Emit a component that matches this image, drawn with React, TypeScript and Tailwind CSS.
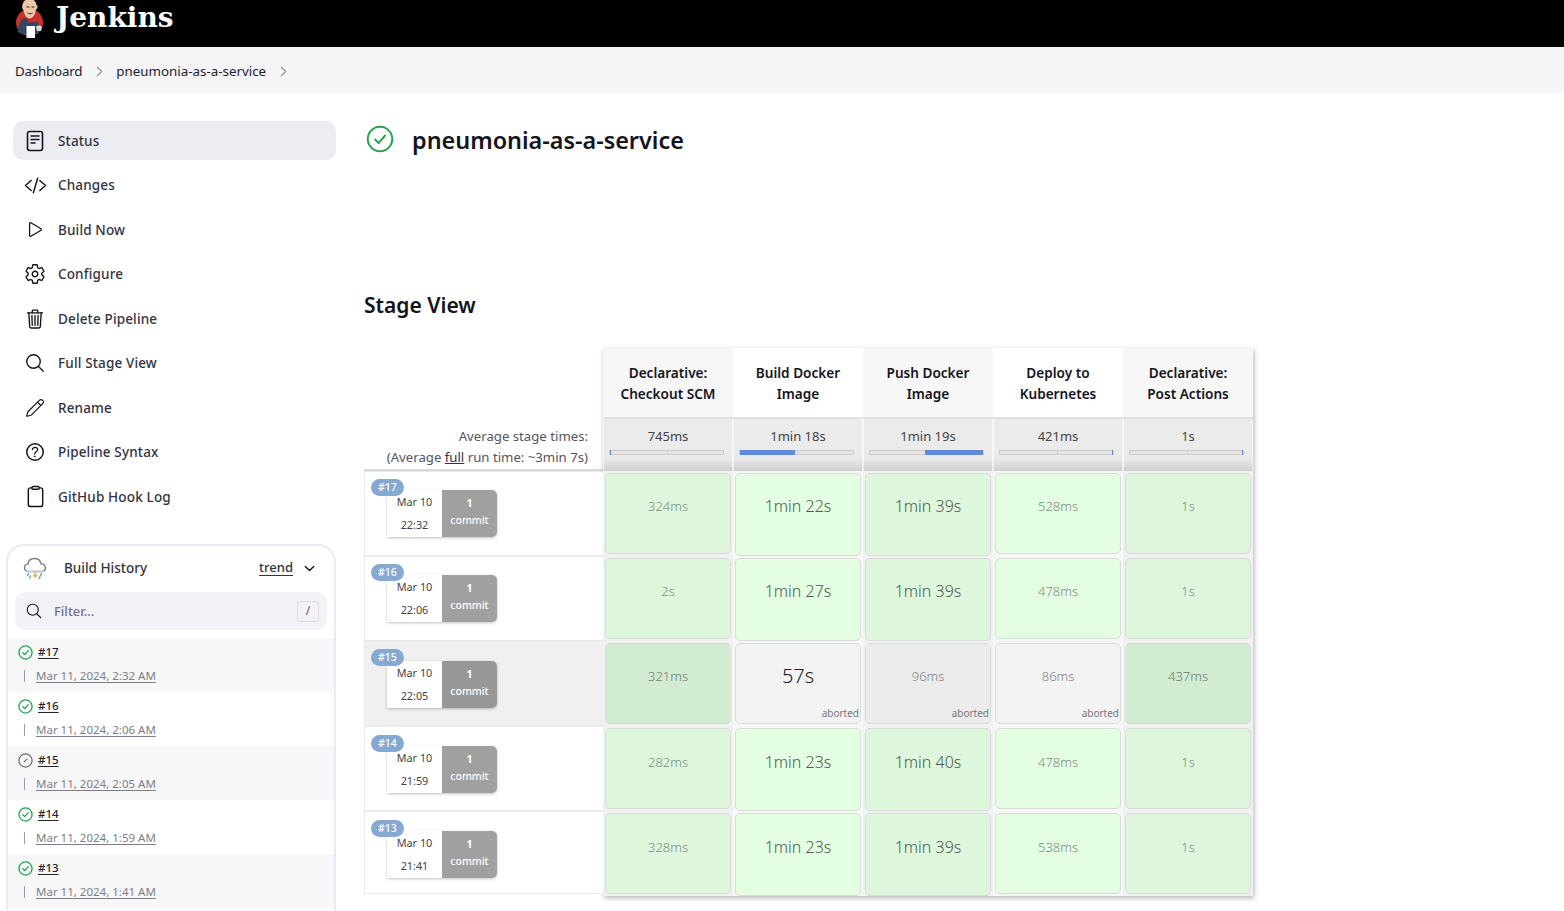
import React from "react";
import {
  IoCodeSlashOutline,
  IoPlayOutline,
  IoSettingsOutline,
  IoTrashOutline,
  IoSearchOutline,
  IoHelpCircleOutline,
  IoClipboardOutline,
  IoChevronDownOutline,
  IoChevronForwardOutline,
} from "react-icons/io5";
import { Pencil } from "lucide-react";

function StatusDoc() {
  return (
    <svg width="22" height="22" viewBox="0 0 22 22" fill="none" stroke="#14141f" strokeWidth="1.6" strokeLinecap="round">
      <rect x="3.5" y="1.5" width="15" height="19" rx="2.2" />
      <path d="M7 6h8M7 9.5h8M7 13h4" strokeWidth="1.5" />
    </svg>
  );
}

function JenkinsLogo() {
  return (
    <svg width="30" height="39" viewBox="0 0 30 39" className="block">
      <circle cx="14.5" cy="22.500" r="13.500" fill="#c8312b" />
      <path d="M3 32c0-7 2-12 6-14l9 2c5 1 7 5 7 9l-2 5H6z" fill="#33475e" />
      <path d="M7.500 5C8 1 11 -1 14.500 -1S21 1 21.500 5c.8 0 1.300 1.500.8 3-.4 1.200-1 1.500-1.500 1.500C20.500 14 18 18.500 14.500 18.500 11 18 9 14 8.500 10 7 9.500 6.800 6.500 7.500 5z" fill="#eec6a8" />
      <path d="M13 18.500l3.500 1.500 4-1.500.5 4-4-.8-4 .8z" fill="#d9272e" />
      <path d="M11.500 26h8.500v12h-8.500z" fill="#ffffff" />
      <path d="M21 26.500c2-1.500 5-1 6 .5l-1 4h-4z" fill="#d8d8d8" />
      <path d="M11.500 7h3M16.500 7h3M12.500 13c1.500 1 4 1 5 0" stroke="#3a2a22" strokeWidth="1" fill="none" />
    </svg>
  );
}

function CheckCircle({ size, sw = 1.4 }: { size: number; sw?: number }) {
  return (
    <svg width={size} height={size} viewBox="0 0 16 16" fill="none" stroke="#1ea64c" strokeWidth={sw} strokeLinecap="round" strokeLinejoin="round">
      <circle cx="8" cy="8" r="7" />
      <path d="M5.200 8.300l2 2 3.700-4.300" />
    </svg>
  );
}

function AbortedCircle({ size }: { size: number }) {
  return (
    <svg width={size} height={size} viewBox="0 0 16 16" fill="none" stroke="#6b6b85" strokeWidth="1.300" strokeLinecap="round">
      <circle cx="8" cy="8" r="7" />
      <path d="M6.500 9.500l3-3" />
    </svg>
  );
}

function Weather() {
  return (
    <svg width="24" height="24" viewBox="0 0 24 24" fill="none">
      <path d="M6 15.500c-3 0-4.500-1.800-4.500-3.800 0-2 1.500-3.400 3.400-3.600C5.400 4.800 8 2.500 11.500 2.500c3.400 0 6 2.200 6.600 5.300 2.500.1 4.400 1.800 4.400 3.900 0 2.200-1.800 3.800-4.500 3.800z" fill="#fff" stroke="#7b7b8e" strokeWidth="1.400" />
      <path d="M2 15.500h20" stroke="#c9c9d4" strokeWidth="1.200" />
      <path d="M12.500 16l-3 4.500h2.500l-1 3.500 3.800-5h-2.500l1.500-3z" fill="#f6b02c" />
      <path d="M5.500 17.500l-1 2M7.500 20l-.8 2M18.500 17.500l-1 2M17 20.500l-.8 2" stroke="#4da6e8" strokeWidth="1.400" strokeLinecap="round" />
    </svg>
  );
}

const nav: [string, React.ReactNode][] = [
  ["Status", <StatusDoc />],
  ["Changes", <IoCodeSlashOutline size={23} />],
  ["Build Now", <IoPlayOutline size={21} />],
  ["Configure", <IoSettingsOutline size={22} />],
  ["Delete Pipeline", <IoTrashOutline size={22} />],
  ["Full Stage View", <IoSearchOutline size={22} />],
  ["Rename", <Pencil size={20} strokeWidth={1.4} />],
  ["Pipeline Syntax", <IoHelpCircleOutline size={24} />],
  ["GitHub Hook Log", <IoClipboardOutline size={23} />],
];

const history = [
  { n: "#17", d: "Mar 11, 2024, 2:32 AM", ok: true },
  { n: "#16", d: "Mar 11, 2024, 2:06 AM", ok: true },
  { n: "#15", d: "Mar 11, 2024, 2:05 AM", ok: false },
  { n: "#14", d: "Mar 11, 2024, 1:59 AM", ok: true },
  { n: "#13", d: "Mar 11, 2024, 1:41 AM", ok: true },
];

const heads = [
  ["Declarative:", "Checkout SCM"],
  ["Build Docker", "Image"],
  ["Push Docker", "Image"],
  ["Deploy to", "Kubernetes"],
  ["Declarative:", "Post Actions"],
];

const avgs: { t: string; from: number; w: number }[] = [
  { t: "745ms", from: 0, w: 1 },
  { t: "1min 18s", from: 0, w: 48.5 },
  { t: "1min 19s", from: 49, w: 51 },
  { t: "421ms", from: 99, w: 1 },
  { t: "1s", from: 99, w: 1 },
];

const runs = [
  { id: "#17", date: "Mar 10", time: "22:32", cells: ["324ms", "1min 22s", "1min 39s", "528ms", "1s"] },
  { id: "#16", date: "Mar 10", time: "22:06", cells: ["2s", "1min 27s", "1min 39s", "478ms", "1s"] },
  { id: "#15", date: "Mar 10", time: "22:05", cells: ["321ms", "57s", "96ms", "86ms", "437ms"] },
  { id: "#14", date: "Mar 10", time: "21:59", cells: ["282ms", "1min 23s", "1min 40s", "478ms", "1s"] },
  { id: "#13", date: "Mar 10", time: "21:41", cells: ["328ms", "1min 23s", "1min 39s", "538ms", "1s"] },
];

function Cell({ text, col, row }: { text: string; col: number; row: number }) {
  const odd = col % 2 === 0;
  const aborted = row === 2 && col >= 1 && col <= 3;
  const big = col === 1 || col === 2;
  const rowBg = odd ? "bg-[#f1f1f1]" : "bg-[#f7f7f7]";
  let bg = odd ? "bg-[#def7dc]" : "bg-[#e4fee2]";
  if (row === 2) {
    if (col === 0 || col === 4) bg = "bg-[#d2ecd1]";
    else if (col === 1 || col === 3) bg = "bg-[#f3f3f3]";
    else bg = "bg-[#ececec]";
  }
  let txt = big ? "text-[16px] font-light text-[#4d5b4d]" : "text-[13px] font-light text-[#7d8a7d]";
  if (aborted && col === 1) txt = "text-[20px] font-light text-[#222222]";
  if (aborted && col !== 1) txt = "text-[13px] font-light text-[#808080]";
  if (row === 2 && (col === 0 || col === 4)) txt = "text-[13px] font-light text-[#6f7f6f]";
  const pad = big && !aborted ? "pb-0" : "pb-[2px]";
  const textTop = row >= 3 ? "pt-[23px]" : "pt-[22px]";
  return (
    <div className={`w-[130px] h-[85px] px-[2px] pt-[2px] ${pad} ${rowBg}`}>
      <div className={`relative h-full rounded-[5px] border border-[#d8dcd8] text-center leading-[20px] ${textTop} ${bg} ${txt}`}>
        {text}
        {aborted && (
          <span className="absolute right-[1px] bottom-[3px] text-[10px] font-normal leading-[14px] text-[#777777]">aborted</span>
        )}
      </div>
    </div>
  );
}

export default function App() {
  return (
    <div className="w-[1564px] h-[911px] overflow-hidden bg-white text-[#14141f]" style={{ fontFamily: '"Noto Sans", sans-serif' }}>
      <header className="h-[47px] bg-black flex items-start pl-[15px] overflow-hidden">
        <JenkinsLogo />
        <span className="ml-[11px] mt-0 text-[28px] leading-[36px] font-bold text-white" style={{ fontFamily: '"DejaVu Serif", serif' }}>
          Jenkins
        </span>
      </header>
      <nav className="h-[46px] bg-[#f5f5f8] flex items-center pl-[15px] pt-[3px] text-[13.350px] text-[#22222e]">
        <span className="tracking-[-0.2px]">Dashboard</span>
        <IoChevronForwardOutline size={15} className="ml-[9.500px] text-[#9a9aa8]" />
        <span className="ml-[9.500px]">pneumonia-as-a-service</span>
        <IoChevronForwardOutline size={15} className="ml-[10px] text-[#9a9aa8]" />
      </nav>
      <div className="flex">
        <aside className="w-[364px] shrink-0 pt-[28px] pl-[13px]">
          <ul className="flex flex-col gap-[5.500px] w-[323px]">
            {nav.map(([label, icon], i) => (
              <li key={label} className={`h-[39px] flex items-center rounded-[10px] ${i === 0 ? "bg-[#ecedf3]" : ""}`}>
                <span className="w-[44px] mr-[1px] flex justify-center text-[#14141f]">{icon}</span>
                <span className="mt-[1px] text-[13.500px] font-medium text-[#33333f] tracking-[0.15px]">{label}</span>
              </li>
            ))}
          </ul>
          <section className="mt-[28px] ml-[-7px] w-[330px] pb-[6px] border-2 border-b-0 border-[#eaeaf3] rounded-t-[18px]">
            <div className="h-[46px] flex items-center pl-[15px] pr-[17px] pb-[2px]">
              <Weather />
              <span className="ml-[17px] text-[13.500px] font-medium text-[#33333f]">Build History</span>
              <span className="ml-auto text-[13px] font-medium underline underline-offset-[3px] text-[#33333f]">trend</span>
              <IoChevronDownOutline size={15} className="ml-[9px]" />
            </div>
            <div className="mx-[7px] h-[38px] bg-[#f2f2f7] rounded-[10px] flex items-center pl-[10px] pr-[8px]">
              <IoSearchOutline size={18} />
              <span className="ml-[11px] mt-[1px] text-[13px] font-medium text-[#73738c]">Filter...</span>
              <span className="ml-auto w-[22px] h-[21px] border border-[#dcdce6] rounded-[4px] flex items-center justify-center text-[12px] text-[#55556a]">/</span>
            </div>
            <div className="mt-[8px]">
              {history.map((h, i) => (
                <div key={h.n} className={`h-[54px] pl-[10px] pt-[4px] ${i % 2 === 0 ? "bg-[#f7f7f8]" : "bg-white"}`}>
                  <div className="flex items-center h-[20px]">
                    {h.ok ? <CheckCircle size={15} /> : <AbortedCircle size={15} />}
                    <span className="ml-[5px] text-[11.500px] font-medium underline underline-offset-[2px] text-[#22222e]">{h.n}</span>
                  </div>
                  <div className="flex items-center h-[20px] mt-[3.500px]">
                    <span className="ml-[6px] w-px h-[12px] bg-[#9a9aa6]" />
                    <span className="ml-[11px] text-[11.500px] underline underline-offset-[2px] text-[#7d7d88]">{h.d}</span>
                  </div>
                </div>
              ))}
            </div>
          </section>
        </aside>
        <main className="flex-1 min-w-0">
          <div className="h-[92px] pt-[30px] flex items-start">
            <div className="ml-[2px] mt-[2px]"><CheckCircle size={28} sw={1.100} /></div>
            <h1 className="ml-[18px] text-[23.400px] leading-[34px] font-semibold text-[#14141f]">pneumonia-as-a-service</h1>
          </div>
          <h2 className="mt-[105px] text-[21px] leading-[30px] font-semibold text-[#14141f]">Stage View</h2>
          <div className="mt-[28px] flex items-start">
            <div className="w-[239px] shrink-0">
              <div className="h-[71px]" />
              <div className="h-[50px] pt-[7px] pr-[15px] text-right text-[13.200px] leading-[21px] text-[#55555f]">
                <div className="whitespace-nowrap">Average stage times:</div>
                <div className="whitespace-nowrap">(Average <span className="underline text-[#33333f]">full</span> run time: ~3min 7s)</div>
              </div>
              <div className="border-t-2 border-[#d8d8d8]">
                {runs.map((r, i) => (
                  <div key={r.id} className={`relative border border-r-0 border-[#ebebeb] pl-[22px] ${i >= 2 ? "pt-[19px]" : "pt-[18px]"} ${i === 4 ? "h-[83px]" : "h-[85px]"} ${i === 2 ? "bg-[#f0f0f0]" : "bg-white"}`}>
                    <span className={`absolute left-[6px] h-[17px] px-[7px] rounded-full bg-[#86a9d2] text-white text-[10.500px] leading-[17px] font-medium ${i >= 3 ? "top-[8px]" : "top-[7px]"}`}>{r.id}</span>
                    <div className="flex w-[110px] h-[47px] rounded-r-[5px] shadow-[0_1px_3px_rgba(0,0,0,0.25)]">
                      <div className="w-[55px] bg-white text-center text-[10.800px] text-[#444444] leading-[23px]">
                        <div>{r.date}</div>
                        <div>{r.time}</div>
                      </div>
                      <div className={`w-[55px] rounded-r-[5px] text-center text-white text-[10.500px] font-medium leading-[17px] pt-[5px] ${i === 2 ? "bg-[#979797]" : "bg-[#a0a0a0]"}`}>
                        <div className="font-bold">1</div>
                        <div>commit</div>
                      </div>
                    </div>
                  </div>
                ))}
              </div>
            </div>
            <div className="w-[650px] shrink-0 shadow-[1px_2px_5px_rgba(0,0,0,0.3)]">
              <div className="flex h-[71px]">
                {heads.map((h, i) => (
                  <div key={i} className={`w-[130px] border-b-2 border-[#e0e0e0] flex flex-col items-center justify-center text-[13.600px] leading-[21px] font-semibold text-[#14141f] ${i % 2 === 0 ? "bg-[#f7f7f7]" : "bg-white"}`}>
                    <div>{h[0]}</div>
                    <div>{h[1]}</div>
                  </div>
                ))}
              </div>
              <div className="flex h-[52px]">
                {avgs.map((a, i) => (
                  <div key={i} className="w-[130px] pt-[7px] text-center text-[13px] leading-[21px] text-[#444444] bg-gradient-to-b from-[#ebebeb] from-75% to-[#cfcfcf] border-x border-white/60">
                    <div>{a.t}</div>
                    <div className="relative ml-[5px] mt-[3px] w-[115px] h-[5px] bg-[#e4e4e4] border border-[#cccccc]">
                      <span className="absolute left-1/2 top-0 bottom-0 w-px bg-[#d0d0d0]" />
                      <span className="absolute top-[-1px] bottom-[-1px] bg-[#5c8dd6]" style={{ left: `${a.from}%`, width: `${a.w}%` }} />
                    </div>
                  </div>
                ))}
              </div>
              {runs.map((r, ri) => (
                <div key={r.id} className="flex">
                  {r.cells.map((c, ci) => (
                    <Cell key={ci} text={c} col={ci} row={ri} />
                  ))}
                </div>
              ))}
            </div>
          </div>
        </main>
      </div>
    </div>
  );
}
